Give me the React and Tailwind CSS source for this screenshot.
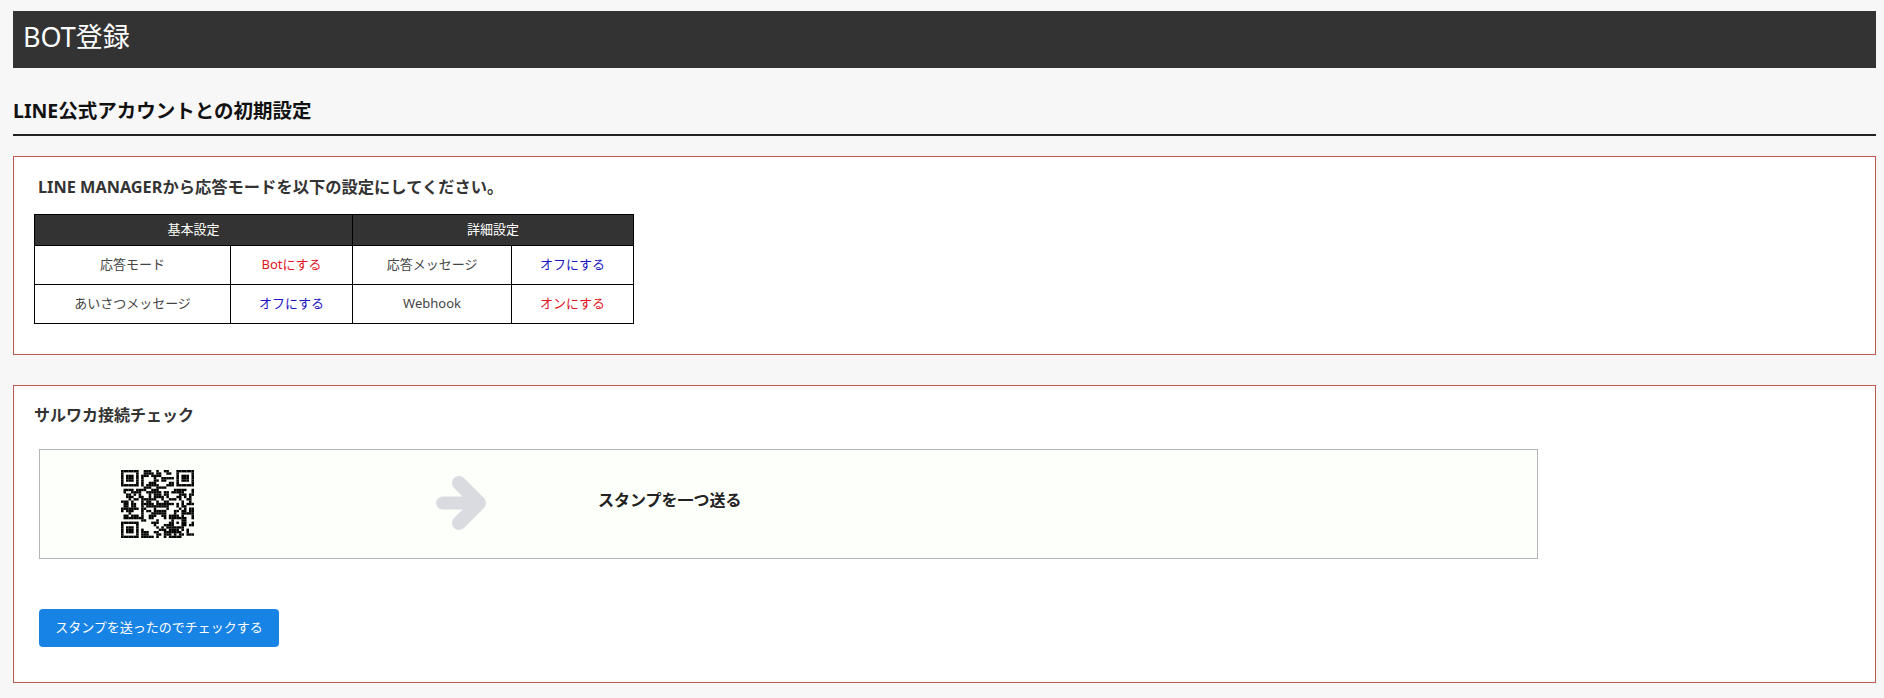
const N = 29;

function buildQr() {
  const g = Array.from({ length: N }, () => Array(N).fill(0));
  let s = 73939;
  const rnd = () => {
    s = (s * 1103515245 + 12345) & 0x7fffffff;
    return (s >> 16) / 32768;
  };
  for (let y = 0; y < N; y++) {
    for (let x = 0; x < N; x++) {
      const left = x > 0 ? g[y][x - 1] : 0;
      const up = y > 0 ? g[y - 1][x] : 0;
      const p = 0.36 + 0.17 * left + 0.17 * up;
      g[y][x] = rnd() < p ? 1 : 0;
    }
  }
  const finder = (ox, oy) => {
    for (let y = -1; y < 8; y++) {
      for (let x = -1; x < 8; x++) {
        const X = ox + x;
        const Y = oy + y;
        if (X < 0 || Y < 0 || X >= N || Y >= N) continue;
        const ring = x >= 0 && x <= 6 && y >= 0 && y <= 6 && (x === 0 || x === 6 || y === 0 || y === 6);
        const core = x >= 2 && x <= 4 && y >= 2 && y <= 4;
        g[Y][X] = ring || core ? 1 : 0;
      }
    }
  };
  finder(0, 0);
  finder(N - 7, 0);
  finder(0, N - 7);
  for (let y = 20; y < 25; y++) {
    for (let x = 20; x < 25; x++) {
      const ring = x === 20 || x === 24 || y === 20 || y === 24;
      g[y][x] = ring || (x === 22 && y === 22) ? 1 : 0;
    }
  }
  return g;
}

const QR = buildQr();

function QrCode() {
  const cells = [];
  QR.forEach((row, y) => {
    row.forEach((c, x) => {
      if (c) cells.push(<rect key={x + "-" + y} x={x} y={y} width="1.02" height="1.02" />);
    });
  });
  return (
    <svg viewBox={`0 0 ${N} ${N}`} preserveAspectRatio="none" className="w-[73px] h-[68px] block" fill="#000">
      {cells}
    </svg>
  );
}

function Arrow() {
  return (
    <svg viewBox="0 0 50 54" className="w-[50px] h-[54px] block" fill="none" stroke="#d9dbe0" strokeLinecap="round" strokeLinejoin="round">
      <path d="M6.5 27H40" strokeWidth="13" />
      <path d="M23 7L43 27L23 47" strokeWidth="14" />
    </svg>
  );
}

const cellBase = "border border-black text-center font-normal text-[13px] text-[#444]";

export default function App() {
  return (
    <div
      className="min-h-[698px] bg-[#f7f7f7] pt-[11px] pl-[13px] pr-[8px] text-[#333]"
      style={{ fontFamily: '"Noto Sans", "Noto Sans CJK JP", sans-serif' }}
    >
      <h1 className="h-[57px] bg-[#333333] text-white text-[27px] font-normal leading-[52px] pl-[10px]">BOT登録</h1>

      <h2 className="mt-[22px] h-[46px] border-b-2 border-[#222] text-[19.5px] font-bold text-[#111] leading-[42px]">
        LINE公式アカウントとの初期設定
      </h2>

      <section className="mt-[20px] h-[199px] border border-[#bd5a50] bg-white pl-[20px] pt-[17px]">
        <p className="text-[16.3px] font-bold leading-[26px] pl-[4px]">LINE MANAGERから応答モードを以下の設定にしてください。</p>
        <table className="mt-[14px] w-[599px] h-[109px] border-collapse table-fixed">
          <colgroup>
            <col className="w-[196px]" />
            <col className="w-[122px]" />
            <col className="w-[159px]" />
            <col className="w-[122px]" />
          </colgroup>
          <thead>
            <tr className="h-[31px]">
              <th colSpan={2} className="border border-black bg-[#333333] text-white font-normal text-[13px]">基本設定</th>
              <th colSpan={2} className="border border-black bg-[#333333] text-white font-normal text-[13px]">詳細設定</th>
            </tr>
          </thead>
          <tbody>
            <tr className="h-[39px]">
              <td className={cellBase}>応答モード</td>
              <td className={`${cellBase} !text-[#e0141c]`}>Botにする</td>
              <td className={cellBase}>応答メッセージ</td>
              <td className={`${cellBase} !text-[#1a14c0]`}>オフにする</td>
            </tr>
            <tr className="h-[39px]">
              <td className={cellBase}>あいさつメッセージ</td>
              <td className={`${cellBase} !text-[#1a14c0]`}>オフにする</td>
              <td className={cellBase}>Webhook</td>
              <td className={`${cellBase} !text-[#e0141c]`}>オンにする</td>
            </tr>
          </tbody>
        </table>
      </section>

      <section className="mt-[30px] h-[298px] border border-[#bd5a50] bg-white pl-[20px] pt-[15px]">
        <h3 className="text-[16px] font-bold leading-[28px] text-[#333]">サルワカ接続チェック</h3>
        <div className="mt-[20px] ml-[5px] w-[1499px] h-[110px] border border-[#b5b5b5] bg-[#fdfffa] flex items-center">
          <div className="ml-[81px] w-[73px]"><QrCode /></div>
          <div className="ml-[242px] -mt-[3px]"><Arrow /></div>
          <p className="ml-[112px] text-[16px] font-bold text-[#222] -mt-[8px]">スタンプを一つ送る</p>
        </div>
        <button className="mt-[50px] ml-[5px] block w-[240px] h-[38px] rounded-[4px] bg-[#1783e4] text-white text-[13px] text-center">
          スタンプを送ったのでチェックする
        </button>
      </section>
    </div>
  );
}
